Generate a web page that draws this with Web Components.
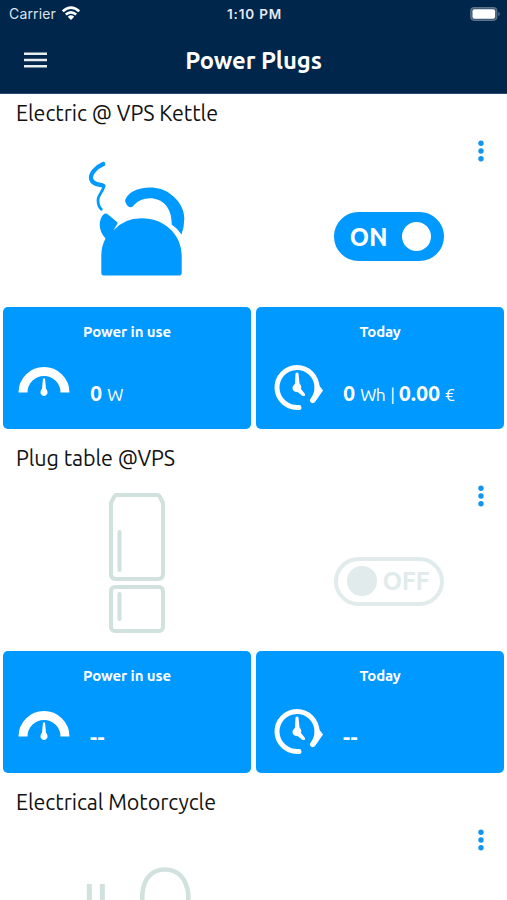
<!DOCTYPE html>
<html lang="en">
<head>
<meta charset="utf-8">
<title>Power Plugs</title>
<style>
  html, body {
    margin: 0;
    height: 100%;
    overflow: hidden;
    background: #fff;
  }

  body {
    --blue: #0099ff;
    --navy: #00264b;
    --pale: #d0e1de;
    --paler: #e2ebeb;
    font-family: Ubuntu, "Noto Sans", "Open Sans", sans-serif;
    color: #111;
  }
</style>
</head>
<body>
<plug-page>
  <status-bar></status-bar>
  <app-header>Power Plugs</app-header>
  <plug-device icon="kettle" state="on">
    <fit-text slot="name" width="202">Electric @ VPS Kettle</fit-text>
    <metric-card icon="gauge" label="Power in use" label-width="88">
      <b>0</b><fit-text width="16">W</fit-text>
    </metric-card>
    <metric-card icon="clock" label="Today" label-width="41">
      <b>0</b><fit-text width="25">Wh</fit-text><i>|</i><fit-text width="41"><b>0.00</b></fit-text><span>€</span>
    </metric-card>
  </plug-device>
  <plug-device icon="fridge" state="off">
    <fit-text slot="name" width="159">Plug table @VPS</fit-text>
    <metric-card icon="gauge" label="Power in use" label-width="88"><fit-text width="15"><b>--</b></fit-text></metric-card>
    <metric-card icon="clock" label="Today" label-width="41"><fit-text width="15"><b>--</b></fit-text></metric-card>
  </plug-device>
  <plug-device icon="motorcycle">
    <fit-text slot="name" width="200">Electrical Motorcycle</fit-text>
  </plug-device>
</plug-page>

<script>
const icons = {
  kettle: `
    <g fill="none" stroke="#0099ff" stroke-linecap="round" stroke-linejoin="round">
      <path d="M36.300 15C29 18 22.500 25 24.300 30.500C26.500 37 34 34.500 36.500 37" stroke-width="4.200"/>
      <path d="M36.800 37C37 41 31 46 31 51C31 55 32 58 34.300 60.300" stroke-width="2.800"/>
    </g>
    <g fill="#0099ff">
      <path d="M63.500 58.300Q61 58.500 58.500 53.500Q57.500 50.500 60 47.500Q62 44 66.300 42.200C78 36.500 94 37.500 103 44.800C112 51 117.300 60 117.300 69.800Q117.300 78 114.500 85.500Q110 79 104.700 75.500C105 58 95 49.200 83 49.200Q73 49.200 67 56Q65.500 58.500 63.500 58.300Z"/>
      <path d="M36 66Q38.500 63.500 41 65.500L50 73Q51 74 50 75.500L46.300 81.500Q57 69.200 74.500 69.200C97 69.200 114.700 85 114.700 107V124Q114.700 126.500 112.500 126.500H36.500Q34.300 126.500 34.300 124V107Q34.300 97 38.500 89.500Q32.700 83 32.700 76Q33 69 36 66Z"/>
    </g>`,
  fridge: `
    <g fill="none" stroke="#d0e1de" stroke-width="4" stroke-linejoin="round" stroke-linecap="round">
      <path d="M49 2H90Q92 2 93 4L96 10V81Q96 86 91 86H49Q44 86 44 81V10L47 4Q48 2 49 2Z"/>
      <rect x="44" y="94" width="52" height="44" rx="4"/>
      <path d="M52.500 39V77M52.500 101V126"/>
    </g>`,
  motorcycle: `
    <g fill="none" stroke="#d0e1de" stroke-width="4.600">
      <path d="M75.300 76V56C77 39 86 31.500 98 31.500S119 39 121.300 56V76"/>
      <path d="M22.300 46V76M35.300 46V76" stroke-width="5"/>
    </g>`
};

const metricIcons = {
  gauge: `
    <path d="M5 37A21 21 0 0 1 47 37" transform="translate(0 -9.500)" fill="none" stroke="#fff" stroke-width="9"/>
    <path d="M25 13.500H27L28 23.500Q30 26 29.500 28.500Q26 33.500 22.500 28.500Q22 26 24 23.500Z" fill="#fff"/>`,
  clock: `
    <g fill="none" stroke="#fff" stroke-width="5" stroke-linecap="round" stroke-linejoin="round">
      <path d="M28 42.400A20 20 0 1 1 46 23"/>
      <path d="M46 23Q46 29 41.500 35.500"/>
    </g>
    <path d="M47 19.500L51.500 25.500L43.500 37L40 34.500L45 27Z" fill="#fff" stroke="#fff" stroke-linejoin="round"/>
    <path d="M24.500 8.500Q26 6.500 27.500 8.500L28.500 18.500Q31 21 30 24L34 29V30.500Q32.500 31.500 31 30.500L26.500 27Q21 27 21.500 22L24 18.500Z" fill="#fff"/>`
};

// Stretches or tightens one line of text so that it fills the given width.
class FitText extends HTMLElement {
  constructor() {
    super();
    this.attachShadow({ mode: 'open' });
    this.shadowRoot.innerHTML = `
      <style>
        :host { display: inline-block; white-space: nowrap; }
        span { display: inline-block; }
      </style>
      <span><slot></slot></span>
    `;
  }

  connectedCallback() {
    const width = Number(this.getAttribute('width'));
    const span = this.shadowRoot.querySelector('span');
    const extra = width - span.getBoundingClientRect().width;
    this.style.letterSpacing = `${extra / this.textContent.trim().length}px`;
    this.style.width = `${width}px`;
  }
}

class StatusBar extends HTMLElement {
  constructor() {
    super();
    this.attachShadow({ mode: 'open' });
    this.shadowRoot.innerHTML = `
      <style>
        :host {
          display: grid;
          grid-template-columns: 1fr auto 1fr;
          align-items: center;
          height: 27px;
          padding: 0 7px 0 9px;
          background: var(--navy);
          color: #dce4ec;
          font-family: Inter, sans-serif;
          font-size: 14px;
        }
        div { display: flex; align-items: center; gap: 6px; }
        .time { font-weight: 600; font-size: 13.5px; color: #e4eaf1; }
        .battery { justify-self: end; }
        svg { display: block; }
      </style>
      <div>
        <fit-text width="47">Carrier</fit-text>
        <svg width="18" height="15" viewBox="0 0 18 15" fill="none" stroke="#fff" stroke-width="2.600">
          <path d="M.8 5.400Q9-2.200 17.200 5.400M3.800 8.600Q9 4.200 14.200 8.600"/>
          <path d="M5.800 10.700Q9 8 12.200 10.700L9 14Z" fill="#fff" stroke="none"/>
        </svg>
      </div>
      <fit-text class="time" width="55">1:10 PM</fit-text>
      <svg class="battery" width="30" height="14" viewBox="0 0 30 14">
        <rect x=".8" y=".7" width="26" height="12.600" rx="3.500" fill="#3b5673" stroke="#5d748c" stroke-width="1.200"/>
        <rect x="2.500" y="2.300" width="22.600" height="9.400" rx="2" fill="#fff"/>
        <path d="M28.400 4.800Q31 7 28.400 9.200Z" fill="#697e95"/>
      </svg>
    `;
  }
}

class AppHeader extends HTMLElement {
  constructor() {
    super();
    this.attachShadow({ mode: 'open' });
    this.shadowRoot.innerHTML = `
      <style>
        :host {
          display: grid;
          grid-template-columns: 1fr auto 1fr;
          align-items: center;
          box-sizing: border-box;
          height: 67px;
          padding: 0 24px;
          border-bottom: 1px solid #2b4970;
          background: var(--navy);
          color: #fff;
        }
        svg { display: block; }
        .title {
          font-size: 23.800px;
          font-weight: 700;
          line-height: 30px;
          letter-spacing: -0.100px;
        }
      </style>
      <svg width="23" height="16" viewBox="0 0 23 16" fill="#e8edf2">
        <path d="M0 .5H23V3H0ZM0 6.700H23V9.200H0ZM0 12.900H23V15.400H0Z"/>
      </svg>
      <div class="title"><slot></slot></div>
    `;
  }
}

class ToggleSwitch extends HTMLElement {
  connectedCallback() {
    const on = this.getAttribute('state') === 'on';
    this.attachShadow({ mode: 'open' });
    this.shadowRoot.innerHTML = `
      <style>
        :host {
          display: flex;
          align-items: center;
          justify-content: space-between;
          flex-direction: ${on ? 'row' : 'row-reverse'};
          box-sizing: border-box;
          width: 110px;
          height: 49px;
          border: 4px solid ${on ? 'var(--blue)' : 'var(--paler)'};
          border-radius: 25px;
          padding: ${on ? '0 9px 0 11px' : '0 11px 0 9px'};
          background: ${on ? 'var(--blue)' : '#fff'};
          color: ${on ? '#fff' : 'var(--paler)'};
          font-size: 25px;
          font-weight: 700;
          line-height: 30px;
        }
        i { width: 29.500px; height: 29.500px; border-radius: 50%; background: currentColor; }
      </style>
      <fit-text width="${on ? 38 : 47}">${on ? 'ON' : 'OFF'}</fit-text><i></i>
    `;
  }
}

class MetricCard extends HTMLElement {
  connectedCallback() {
    this.attachShadow({ mode: 'open' });
    this.shadowRoot.innerHTML = `
      <style>
        :host {
          display: flex;
          flex-direction: column;
          flex: 1;
          box-sizing: border-box;
          height: 122px;
          padding-top: 15px;
          border-radius: 5px;
          background: var(--blue);
          color: #fff;
        }
        .label {
          align-self: center;
          font-size: 15px;
          font-weight: 700;
          line-height: 20px;
        }
        .row { display: flex; margin: 23px 0 0 15px; }
        svg { display: block; flex: none; overflow: visible; }
        .value {
          display: flex;
          align-items: baseline;
          margin: 14px 0 0 20px;
          font-size: 17.500px;
          line-height: 28px;
        }
        ::slotted(b) { font-size: 21.500px; margin-right: 5px; }
        ::slotted(i) { font-style: normal; margin: 0 4px 0 5px; }
        ::slotted(span) { margin-left: 5px; }
      </style>
      <fit-text class="label" width="${this.getAttribute('label-width')}">${this.getAttribute('label')}</fit-text>
      <div class="row">
        <svg width="52" height="48" viewBox="0 0 52 48">${metricIcons[this.getAttribute('icon')]}</svg>
        <div class="value"><slot></slot></div>
      </div>
    `;
    this.querySelectorAll('fit-text b').forEach((b) => { b.style.fontSize = '21.5px'; });
  }
}

class PlugDevice extends HTMLElement {
  connectedCallback() {
    const state = this.getAttribute('state');
    this.attachShadow({ mode: 'open' });
    this.shadowRoot.innerHTML = `
      <style>
        :host { display: block; flex: none; height: 344.500px; }
        .name { padding: 4px 16px 0; height: 30px; font-size: 21.500px; line-height: 30px; }
        .hero {
          display: flex;
          height: 137.500px;
          padding: 20.500px 20px 0 67px;
        }
        svg { display: block; flex: none; overflow: visible; }
        toggle-switch { margin: 63.500px 0 0 127.400px; }
        .dots { margin: -9.500px 0 0 auto; }
        .metrics { display: flex; gap: 5px; padding: 20.500px 3px 0; }
      </style>
      <div class="name"><slot name="name"></slot></div>
      <div class="hero">
        <svg width="140" height="140" viewBox="0 0 140 140">${icons[this.getAttribute('icon')]}</svg>
        ${state ? `<toggle-switch state="${state}"></toggle-switch>` : ''}
        <svg class="dots" width="12" height="24" viewBox="0 0 12 24" fill="#1295f2">
          <circle cx="6" cy="4.300" r="2.700"/><circle cx="6" cy="12" r="2.700"/><circle cx="6" cy="19.700" r="2.700"/>
        </svg>
      </div>
      <div class="metrics"><slot></slot></div>
    `;
  }
}

class PlugPage extends HTMLElement {
  constructor() {
    super();
    this.attachShadow({ mode: 'open' });
    this.shadowRoot.innerHTML = `
      <style>
        :host { display: flex; flex-direction: column; height: 100vh; overflow: hidden; }
        ::slotted(*) { flex: none; }
      </style>
      <slot></slot>
    `;
  }
}

customElements.define('plug-page', PlugPage);
customElements.define('status-bar', StatusBar);
customElements.define('app-header', AppHeader);
customElements.define('toggle-switch', ToggleSwitch);
customElements.define('metric-card', MetricCard);
customElements.define('plug-device', PlugDevice);
// Defined last: the text is measured with its final font size.
customElements.define('fit-text', FitText);
</script>
</body>
</html>
